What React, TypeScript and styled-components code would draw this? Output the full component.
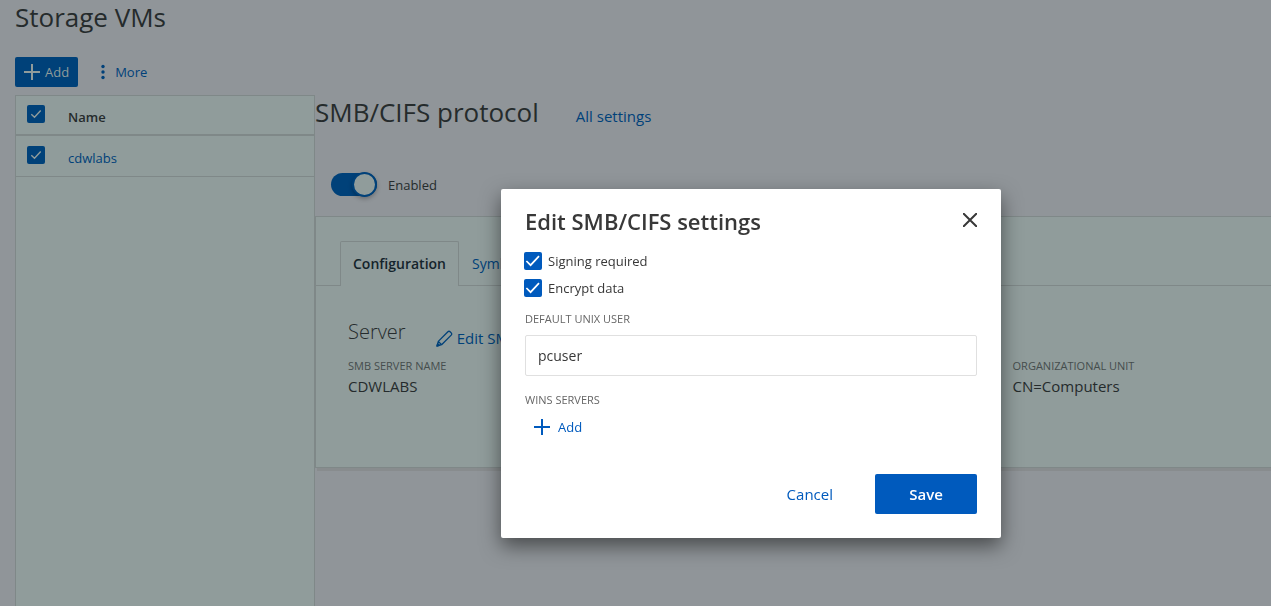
import React from "react";
import styled, { createGlobalStyle } from "styled-components";

const dim = {
  page: "#909599",
  panel: "#909c9b",
  line: "#7f8888",
  text: "#252b2c",
  muted: "#454d4d",
  blue: "#004179",
};
const bright = { blue: "#005abd", text: "#383838", muted: "#666666", line: "#e0e0e0" };

const Global = createGlobalStyle`
  *, *::before { box-sizing: border-box; }
  body {
    margin: 0;
    background: ${dim.page};
    color: ${dim.text};
    font: 13px/20px "Open Sans", "Noto Sans", sans-serif;
  }
  button, input { font: inherit; color: inherit; }
  button { border: 0; padding: 0; background: none; cursor: pointer; }
  h1, h2, h3, dl, dd { margin: 0; font-weight: 400; }
  svg { display: block; }
`;

const Page = styled.main`
  min-height: 100vh;
  padding-left: 15px;
  display: flex;
  flex-direction: column;
  overflow: hidden;
`;
const PageTitle = styled.h1`
  font-size: 26px;
  line-height: 34px;
`;
const Toolbar = styled.div`
  display: flex;
  align-items: center;
  gap: 20px;
  padding: 23px 0 8px;
`;
const AddButton = styled.button`
  display: flex;
  align-items: center;
  gap: 5px;
  height: 30px;
  padding: 0 9px;
  border-radius: 2px;
  background: ${dim.blue};
  color: ${dim.panel};
`;
const MoreButton = styled.button`
  display: flex;
  align-items: center;
  gap: 9px;
  color: ${dim.blue};
`;
const Columns = styled.div`
  flex: 1;
  display: grid;
  grid-template-columns: 300px minmax(0, 1fr);
`;
const VmList = styled.div`
  background: ${dim.panel};
  border: 1px solid ${dim.line};
  border-bottom: 0;
`;
const VmTable = styled.table`
  width: 100%;
  border-collapse: separate;
  border-spacing: 0;
  table-layout: fixed;
  th, td {
    padding: 0;
    text-align: left;
    border-bottom: 1px solid ${dim.line};
    height: 41px;
  }
  th { height: 40px; border-bottom-width: 2px; font-weight: 600; padding-top: 4px; }
  td { padding-top: 4px; }
  th:first-child, td:first-child { width: 52px; padding: 0 0 2px 11px; }
  a { color: ${dim.blue}; text-decoration: none; }
`;

const CheckBox = styled.span<{ $fill: string; $tick: string }>`
  display: grid;
  width: 18px;
  height: 18px;
  > * { grid-area: 1 / 1; }
  input {
    appearance: none;
    width: 18px;
    height: 18px;
    margin: 0;
    border-radius: 2px;
    background: ${(p) => p.$fill};
  }
  svg { pointer-events: none; stroke: ${(p) => p.$tick}; z-index: 1; }
`;

function Check({ dimmed, ...rest }: { dimmed?: boolean } & React.InputHTMLAttributes<HTMLInputElement>) {
  return (
    <CheckBox $fill={dimmed ? dim.blue : bright.blue} $tick={dimmed ? dim.panel : "#ffffff"}>
      <input type="checkbox" defaultChecked {...rest} />
      <svg width="18" height="18" viewBox="0 0 18 18" fill="none" strokeWidth={dimmed ? 1.4 : 1.7}>
        <path d={dimmed ? "M4.3 9.3 7.5 12.3 13.7 5.6" : "M2.4 9 6.6 13.2 15 4.2"} />
      </svg>
    </CheckBox>
  );
}

function Plus() {
  return (
    <svg width="16" height="16" viewBox="0 0 16 16" fill="none" stroke="currentColor" strokeWidth="2" aria-hidden="true">
      <path d="M8 0V16M0 8H16" />
    </svg>
  );
}

const Detail = styled.section``;
const DetailHead = styled.div`
  display: flex;
  align-items: center;
  gap: 37px;
  h2 { font-size: 26px; line-height: 34px; }
  a { padding-top: 8px; font-size: 15px; color: ${dim.blue}; text-decoration: none; }
`;
const SwitchLabel = styled.label`
  display: flex;
  align-items: center;
  gap: 11px;
  width: max-content;
  margin: 44px 0 0 16px;
`;
const Switch = styled.input`
  appearance: none;
  display: flex;
  align-items: center;
  justify-content: flex-end;
  width: 46px;
  height: 23px;
  margin: 0;
  border-radius: 12px;
  background: ${dim.blue};
  &::before {
    content: "";
    flex: none;
    width: 25px;
    height: 25px;
    border: 2px solid ${dim.blue};
    border-radius: 50%;
    background: ${dim.panel};
    box-shadow: 0 2px 4px rgba(0, 0, 0, 0.25);
  }
`;
const Card = styled.div`
  margin-top: 20px;
  border: 1px solid ${dim.line};
  border-right: 0;
  background: ${dim.panel};
  box-shadow: 2px 3px 0 #888c8e;
`;
const Tabs = styled.div`
  display: flex;
  align-items: flex-end;
  padding: 24px 0 0 24px;
  box-shadow: inset 0 -1px 0 ${dim.line};
`;
const Tab = styled.button<{ $active?: boolean }>`
  height: 45px;
  padding: 0 12px;
  font-size: 14px;
  font-weight: ${(p) => (p.$active ? 600 : 400)};
  color: ${(p) => (p.$active ? "#14242b" : dim.blue)};
  border: 1px solid ${(p) => (p.$active ? dim.line : "transparent")};
  border-bottom: 0;
  border-radius: 2px 2px 0 0;
  background: ${(p) => (p.$active ? dim.panel : "transparent")};
`;
const Server = styled.div`
  padding: 30px 0 71px 32px;
`;
const ServerHead = styled.div`
  display: flex;
  align-items: center;
  gap: 30px;
  h3 { font-size: 20px; line-height: 32px; font-weight: 300; }
`;
const EditButton = styled.button`
  display: flex;
  align-items: center;
  gap: 4px;
  padding-top: 12px;
  font-size: 15px;
  color: ${dim.blue};
`;
const Facts = styled.dl`
  display: grid;
  grid-template-columns: 72% 28%;
  margin-top: 8px;
  dt { font-size: 11px; color: ${dim.muted}; text-transform: uppercase; }
  dd { font-size: 15px; }
`;

const Layer = styled.div`
  position: fixed;
  inset: 0;
  display: flex;
  justify-content: center;
  align-items: flex-start;
  padding: 189px 0 0 231px;
`;
const Dialog = styled.form`
  width: 500px;
  padding: 16px 24px 24px;
  border-radius: 2px;
  background: #fff;
  color: ${bright.text};
  box-shadow: 0 8px 20px rgba(0, 0, 0, 0.5);
`;
const DialogHead = styled.header`
  display: flex;
  justify-content: space-between;
  align-items: center;
  h2 { font-size: 22px; line-height: 32px; font-weight: 600; }
`;
const CloseButton = styled.button`
  padding: 0 0 2px;
`;
const Options = styled.div`
  display: grid;
  gap: 7px;
  margin: 14px 0 11px -1px;
`;
const Option = styled.label`
  display: flex;
  align-items: center;
  gap: 6px;
  width: max-content;
`;
const Caption = styled.label`
  display: block;
  font-size: 11px;
  line-height: 20px;
  color: ${bright.muted};
  text-transform: uppercase;
`;
const TextBox = styled.input`
  display: block;
  width: 100%;
  height: 41px;
  margin: 6px 0 14px;
  padding: 0 12px;
  border: 1px solid ${bright.line};
  border-radius: 2px;
  background: #fff;
  font-size: 14px;
`;
const AddLink = styled.button`
  display: flex;
  align-items: center;
  gap: 8px;
  margin: 7px 0 0 9px;
  color: ${bright.blue};
`;
const Actions = styled.footer`
  display: flex;
  justify-content: flex-end;
  align-items: center;
  gap: 42px;
  margin-top: 37px;
  font-size: 15px;
`;
const CancelButton = styled.button`
  color: ${bright.blue};
`;
const SaveButton = styled.button`
  width: 102px;
  height: 40px;
  border-radius: 2px;
  background: ${bright.blue};
  color: #fff;
  font-weight: 600;
`;

export default function App() {
  return (
    <>
      <Global />
      <Page>
        <PageTitle>Storage VMs</PageTitle>
        <Toolbar>
          <AddButton type="button">
            <Plus />
            Add
          </AddButton>
          <MoreButton type="button">
            <svg width="8" height="16" viewBox="0 0 8 16" fill="currentColor" aria-hidden="true">
              <circle cx="5" cy="2.5" r="1.7" />
              <circle cx="5" cy="8" r="1.7" />
              <circle cx="5" cy="13.5" r="1.7" />
            </svg>
            More
          </MoreButton>
        </Toolbar>
        <Columns>
          <VmList>
            <VmTable>
              <thead>
                <tr>
                  <th><Check dimmed aria-label="Select all" /></th>
                  <th>Name</th>
                </tr>
              </thead>
              <tbody>
                <tr>
                  <td><Check dimmed aria-label="Select cdwlabs" /></td>
                  <td><a href="#cdwlabs">cdwlabs</a></td>
                </tr>
              </tbody>
            </VmTable>
          </VmList>
          <Detail>
            <DetailHead>
              <h2>SMB/CIFS protocol</h2>
              <a href="#settings">All settings</a>
            </DetailHead>
            <SwitchLabel>
              <Switch type="checkbox" role="switch" defaultChecked />
              Enabled
            </SwitchLabel>
            <Card>
              <Tabs role="tablist">
                <Tab type="button" role="tab" aria-selected="true" $active>Configuration</Tab>
                <Tab type="button" role="tab" aria-selected="false">Symlinks</Tab>
              </Tabs>
              <Server>
                <ServerHead>
                  <h3>Server</h3>
                  <EditButton type="button">
                    <svg width="17" height="17" viewBox="0 0 17 17" fill="none" stroke="currentColor" strokeWidth="1.3" strokeLinejoin="round" aria-hidden="true">
                      <path d="M1 16 2.3 11.4 11.9 1.8Q13 .8 14.1 1.8L15.2 2.9Q16.2 4 15.2 5.1L5.6 14.7ZM2.3 11.4 5.6 14.7" />
                      <path d="M1 16 1.7 13.6 3.4 15.3Z" fill="currentColor" />
                    </svg>
                    Edit SMB
                  </EditButton>
                </ServerHead>
                <Facts>
                  <div>
                    <dt>SMB server name</dt>
                    <dd>CDWLABS</dd>
                  </div>
                  <div>
                    <dt>Organizational unit</dt>
                    <dd>CN=Computers</dd>
                  </div>
                </Facts>
              </Server>
            </Card>
          </Detail>
        </Columns>
      </Page>
      <Layer>
        <Dialog role="dialog" aria-labelledby="dialog-title" onSubmit={(e) => e.preventDefault()}>
          <DialogHead>
            <h2 id="dialog-title">Edit SMB/CIFS settings</h2>
            <CloseButton type="button" aria-label="Close">
              <svg width="14" height="14" viewBox="0 0 14 14" fill="none" stroke="currentColor" strokeWidth="2">
                <path d="M0 0 14 14M14 0 0 14" />
              </svg>
            </CloseButton>
          </DialogHead>
          <Options>
            <Option><Check />Signing required</Option>
            <Option><Check />Encrypt data</Option>
          </Options>
          <Caption htmlFor="unix-user">Default UNIX user</Caption>
          <TextBox id="unix-user" type="text" defaultValue="pcuser" />
          <Caption as="div">WINS servers</Caption>
          <AddLink type="button">
            <Plus />
            Add
          </AddLink>
          <Actions>
            <CancelButton type="button">Cancel</CancelButton>
            <SaveButton type="submit">Save</SaveButton>
          </Actions>
        </Dialog>
      </Layer>
    </>
  );
}
